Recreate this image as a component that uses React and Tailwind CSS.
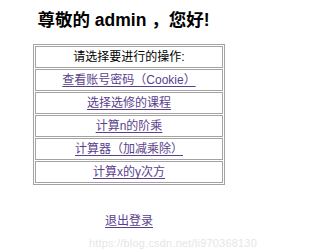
export default function App() {
  const links = [
    '查看账号密码（Cookie）',
    '选择选修的课程',
    '计算n的阶乘',
    '计算器（加减乘除）',
    '计算x的y次方',
  ];

  return (
    <div className="relative w-[258px] h-[252px] bg-white overflow-hidden font-['Liberation_Sans','Noto_Sans_CJK_SC',sans-serif] text-black">
      <div className="flex flex-col items-center pt-[9px]">
        <h2 className="text-[17.5px] leading-[22px] font-bold mr-[11px]">尊敬的 admin ，您好!</h2>

        {/* menu table */}
        <div className="mt-[13px] w-[192px] border border-[#a3a3a3] p-[1px] flex flex-col gap-[1px]">
          <div className="h-[22px] border border-[#a3a3a3] flex items-center justify-center text-[12px]">
            请选择要进行的操作:
          </div>
          {links.map((item) => (
            <div
              key={item}
              className="h-[22px] border border-[#a3a3a3] flex items-center justify-center text-[12px]"
            >
              <a href="#" className="text-[#5b3f8c] underline underline-offset-2">
                {item}
              </a>
            </div>
          ))}
        </div>

        <a href="#" className="mt-[27px] text-[12px] text-[#5b3f8c] underline underline-offset-2">
          退出登录
        </a>
      </div>

      {/* watermark */}
      <div className="absolute right-[1px] top-[235px] text-[11px] text-[#e6e6e6] tracking-[0.2px]">
        https://blog.csdn.net/li970368130
      </div>
    </div>
  );
}
